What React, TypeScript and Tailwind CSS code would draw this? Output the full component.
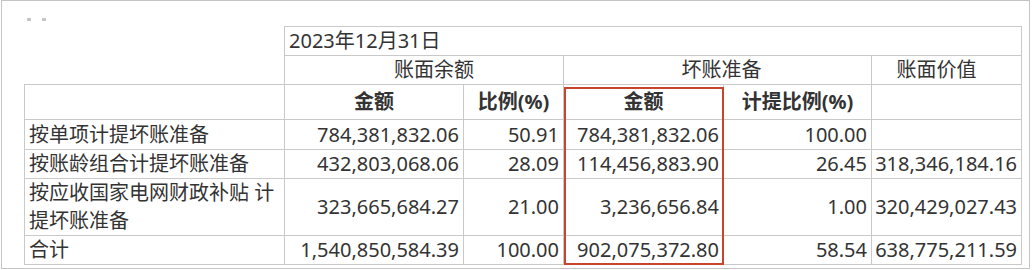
const rows = [
  {
    name: ["按单项计提坏账准备"],
    balance: "784,381,832.06",
    ratio: "50.91",
    bad: "784,381,832.06",
    badRatio: "100.00",
    book: "",
    h: "h-[30px]",
  },
  {
    name: ["按账龄组合计提坏账准备"],
    balance: "432,803,068.06",
    ratio: "28.09",
    bad: "114,456,883.90",
    badRatio: "26.45",
    book: "318,346,184.16",
    h: "h-[29px]",
  },
  {
    name: ["按应收国家电网财政补贴 计", "提坏账准备"],
    balance: "323,665,684.27",
    ratio: "21.00",
    bad: "3,236,656.84",
    badRatio: "1.00",
    book: "320,429,027.43",
    h: "h-[56px]",
  },
  {
    name: ["合计"],
    balance: "1,540,850,584.39",
    ratio: "100.00",
    bad: "902,075,372.80",
    badRatio: "58.54",
    book: "638,775,211.59",
    h: "h-[29px]",
  },
];

const cell = "border border-[#c9c9c9] p-0 leading-[28px]";

export default function App() {
  return (
    <div
      className="relative w-[1032px] h-[270px] bg-white text-[20px] text-[#333]"
      style={{ fontFamily: '"Noto Sans", "Noto Sans CJK SC", sans-serif' }}
    >
      <div className="ml-[1px] w-[1029px] h-[269px] border border-[#c4c4c4]">
        {/* stray dots top left */}
        <div className="h-[25px] flex items-start gap-[11px] pl-[25px] pt-[17px]">
          <span className="w-[4px] h-[3px] bg-[#c6c6c6]" />
          <span className="w-[4px] h-[3px] bg-[#c6c6c6]" />
        </div>

        <table className="ml-[22px] border-collapse table-fixed w-[997px]">
          <colgroup>
            <col className="w-[260px]" />
            <col className="w-[179px]" />
            <col className="w-[100px]" />
            <col className="w-[160px]" />
            <col className="w-[148px]" />
            <col className="w-[150px]" />
          </colgroup>
          <tbody>
            <tr className="h-[29px]">
              <td rowSpan={2} className="p-0" />
              <td colSpan={5} className={`${cell} pl-1 text-left`}>
                2023年12月31日
              </td>
            </tr>
            <tr className="h-[28px]">
              <td colSpan={2} className={`${cell} text-center pl-5`}>
                账面余额
              </td>
              <td colSpan={2} className={`${cell} text-center pl-2`}>
                坏账准备
              </td>
              <td className={`${cell} text-center pr-5`}>账面价值</td>
            </tr>
            <tr className="h-[35px] font-bold">
              <td className={cell} />
              <td className={`${cell} text-center`}>金额</td>
              <td className={`${cell} text-center`}>比例(%)</td>
              <td className={`${cell} text-center`}>金额</td>
              <td className={`${cell} text-center`}>计提比例(%)</td>
              <td className={cell} />
            </tr>
            {rows.map((r) => (
              <tr key={r.name[0]} className={r.h}>
                <td className={`${cell} pl-1 text-left`}>
                  {r.name.map((n) => (
                    <div key={n}>{n}</div>
                  ))}
                </td>
                <td className={`${cell} pr-1 text-right`}>{r.balance}</td>
                <td className={`${cell} pr-1 text-right`}>{r.ratio}</td>
                <td className={`${cell} pr-1 text-right`}>{r.bad}</td>
                <td className={`${cell} pr-1 text-right`}>{r.badRatio}</td>
                <td className={`${cell} pr-1 text-right`}>{r.book}</td>
              </tr>
            ))}
          </tbody>
        </table>
      </div>

      {/* red highlight around the bad-debt amount column */}
      <div className="absolute left-[564px] top-[87px] w-[160px] h-[178px] border-2 border-[#c8442c] pointer-events-none" />
    </div>
  );
}
